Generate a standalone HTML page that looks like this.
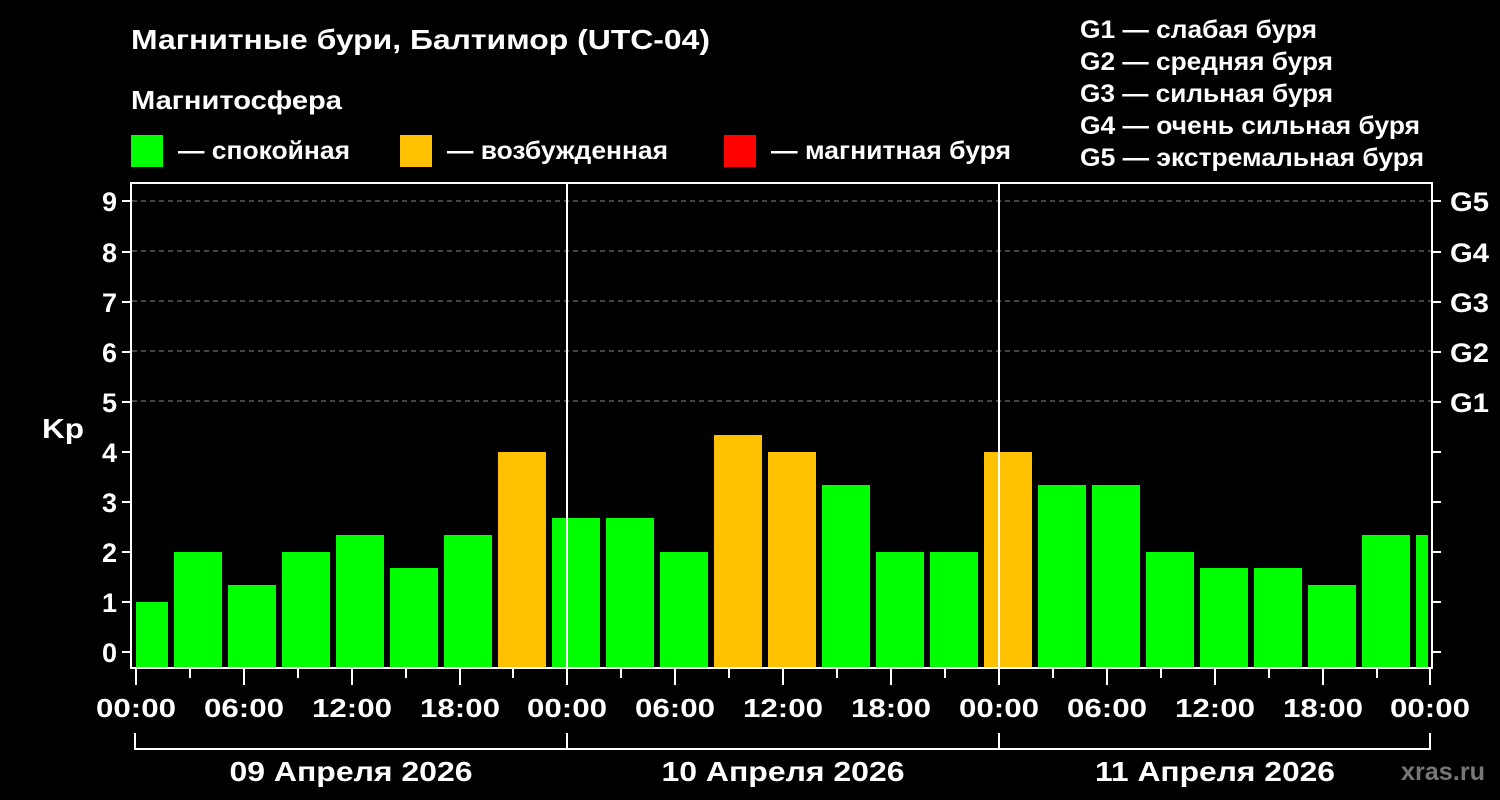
<!DOCTYPE html>
<html><head><meta charset="utf-8"><style>
html,body{margin:0;padding:0;background:#000;}
svg{display:block;}
text{font-family:"Liberation Sans",sans-serif;font-weight:bold;fill:#fff;}
</style></head><body>
<svg width="1500" height="800" viewBox="0 0 1500 800" xmlns="http://www.w3.org/2000/svg">
<rect width="1500" height="800" fill="#000"/>
<text x="131" y="49" font-size="28" textLength="579" lengthAdjust="spacingAndGlyphs">Магнитные бури, Балтимор (UTC-04)</text>
<text x="131" y="109" font-size="26" textLength="211" lengthAdjust="spacingAndGlyphs">Магнитосфера</text>
<rect x="131" y="135" width="32" height="32" fill="#00ff00"/>
<text x="178" y="159" font-size="25" textLength="172" lengthAdjust="spacingAndGlyphs">— спокойная</text>
<rect x="400" y="135" width="32" height="32" fill="#ffc000"/>
<text x="447" y="159" font-size="25" textLength="221" lengthAdjust="spacingAndGlyphs">— возбужденная</text>
<rect x="724" y="135" width="32" height="32" fill="#ff0000"/>
<text x="771" y="159" font-size="25" textLength="240" lengthAdjust="spacingAndGlyphs">— магнитная буря</text>
<g font-size="25">
<text x="1080" y="38" textLength="237" lengthAdjust="spacingAndGlyphs">G1 — слабая буря</text>
<text x="1080" y="70" textLength="253" lengthAdjust="spacingAndGlyphs">G2 — средняя буря</text>
<text x="1080" y="102" textLength="253" lengthAdjust="spacingAndGlyphs">G3 — сильная буря</text>
<text x="1080" y="134" textLength="340" lengthAdjust="spacingAndGlyphs">G4 — очень сильная буря</text>
<text x="1080" y="166" textLength="344" lengthAdjust="spacingAndGlyphs">G5 — экстремальная буря</text>
</g>
<g stroke="#888" stroke-width="1" stroke-dasharray="5,4">
<line x1="132" y1="201" x2="1431" y2="201"/>
<line x1="132" y1="251" x2="1431" y2="251"/>
<line x1="132" y1="301" x2="1431" y2="301"/>
<line x1="132" y1="351" x2="1431" y2="351"/>
<line x1="132" y1="401" x2="1431" y2="401"/>
</g>
<g fill="#00ff00">
<rect x="136" y="602" width="32" height="66"/>
<rect x="174" y="552" width="48" height="116"/>
<rect x="228" y="585" width="48" height="83"/>
<rect x="282" y="552" width="48" height="116"/>
<rect x="336" y="535" width="48" height="133"/>
<rect x="390" y="568" width="48" height="100"/>
<rect x="444" y="535" width="48" height="133"/>
<rect x="498" y="452" width="48" height="216" fill="#ffc000"/>
<rect x="552" y="518" width="48" height="150"/>
<rect x="606" y="518" width="48" height="150"/>
<rect x="660" y="552" width="48" height="116"/>
<rect x="714" y="435" width="48" height="233" fill="#ffc000"/>
<rect x="768" y="452" width="48" height="216" fill="#ffc000"/>
<rect x="822" y="485" width="48" height="183"/>
<rect x="876" y="552" width="48" height="116"/>
<rect x="930" y="552" width="48" height="116"/>
<rect x="984" y="452" width="48" height="216" fill="#ffc000"/>
<rect x="1038" y="485" width="48" height="183"/>
<rect x="1092" y="485" width="48" height="183"/>
<rect x="1146" y="552" width="48" height="116"/>
<rect x="1200" y="568" width="48" height="100"/>
<rect x="1254" y="568" width="48" height="100"/>
<rect x="1308" y="585" width="48" height="83"/>
<rect x="1362" y="535" width="48" height="133"/>
<rect x="1416" y="535" width="12" height="133"/>
</g>
<g stroke="#fff" stroke-width="2" fill="none">
<rect x="131" y="183" width="1301" height="485"/>
<line x1="567" y1="183" x2="567" y2="668"/>
<line x1="999" y1="183" x2="999" y2="668"/>
<path d="M122 652H131M122 602H131M122 552H131M122 502H131M122 452H131M122 402H131M122 352H131M122 302H131M122 252H131M122 201H131"/>
<path d="M1432 652H1441M1432 602H1441M1432 552H1441M1432 502H1441M1432 452H1441M1432 402H1441M1432 352H1441M1432 302H1441M1432 252H1441M1432 201H1441"/>
<path d="M136 668V685M244 668V685M352 668V685M460 668V685M567 668V685M675 668V685M783 668V685M891 668V685M999 668V685M1107 668V685M1215 668V685M1323 668V685M1430 668V685"/>
<path d="M190 668V678M298 668V678M406 668V678M513 668V678M621 668V678M729 668V678M837 668V678M945 668V678M1053 668V678M1161 668V678M1269 668V678M1377 668V678"/>
<path d="M135 733V749H1430V733M567 733V749M999 733V749"/>
</g>
<g font-size="27" text-anchor="end">
<text x="117" y="662">0</text><text x="117" y="612">1</text><text x="117" y="562">2</text>
<text x="117" y="512">3</text><text x="117" y="462">4</text><text x="117" y="412">5</text>
<text x="117" y="362">6</text><text x="117" y="312">7</text><text x="117" y="262">8</text>
<text x="117" y="211">9</text>
</g>
<g font-size="27">
<text x="1450" y="412" textLength="39" lengthAdjust="spacingAndGlyphs">G1</text>
<text x="1450" y="362" textLength="39" lengthAdjust="spacingAndGlyphs">G2</text>
<text x="1450" y="312" textLength="39" lengthAdjust="spacingAndGlyphs">G3</text>
<text x="1450" y="262" textLength="39" lengthAdjust="spacingAndGlyphs">G4</text>
<text x="1450" y="211" textLength="39" lengthAdjust="spacingAndGlyphs">G5</text>
</g>
<text x="42" y="438" font-size="28" textLength="42" lengthAdjust="spacingAndGlyphs">Kp</text>
<g font-size="26" text-anchor="middle">
<text x="136" y="717" textLength="80" lengthAdjust="spacingAndGlyphs">00:00</text><text x="244" y="717" textLength="80" lengthAdjust="spacingAndGlyphs">06:00</text><text x="352" y="717" textLength="80" lengthAdjust="spacingAndGlyphs">12:00</text><text x="460" y="717" textLength="80" lengthAdjust="spacingAndGlyphs">18:00</text>
<text x="567" y="717" textLength="80" lengthAdjust="spacingAndGlyphs">00:00</text><text x="675" y="717" textLength="80" lengthAdjust="spacingAndGlyphs">06:00</text><text x="783" y="717" textLength="80" lengthAdjust="spacingAndGlyphs">12:00</text><text x="891" y="717" textLength="80" lengthAdjust="spacingAndGlyphs">18:00</text>
<text x="999" y="717" textLength="80" lengthAdjust="spacingAndGlyphs">00:00</text><text x="1107" y="717" textLength="80" lengthAdjust="spacingAndGlyphs">06:00</text><text x="1215" y="717" textLength="80" lengthAdjust="spacingAndGlyphs">12:00</text><text x="1323" y="717" textLength="80" lengthAdjust="spacingAndGlyphs">18:00</text>
<text x="1430" y="717" textLength="80" lengthAdjust="spacingAndGlyphs">00:00</text>
</g>
<g font-size="28" text-anchor="middle">
<text x="351" y="781" textLength="243" lengthAdjust="spacingAndGlyphs">09 Апреля 2026</text>
<text x="783" y="781" textLength="243" lengthAdjust="spacingAndGlyphs">10 Апреля 2026</text>
<text x="1215" y="781" textLength="240" lengthAdjust="spacingAndGlyphs">11 Апреля 2026</text>
</g>
<text x="1401" y="780" font-size="25" textLength="84" lengthAdjust="spacingAndGlyphs" style="fill:#777">xras.ru</text>
</svg>
</body></html>
